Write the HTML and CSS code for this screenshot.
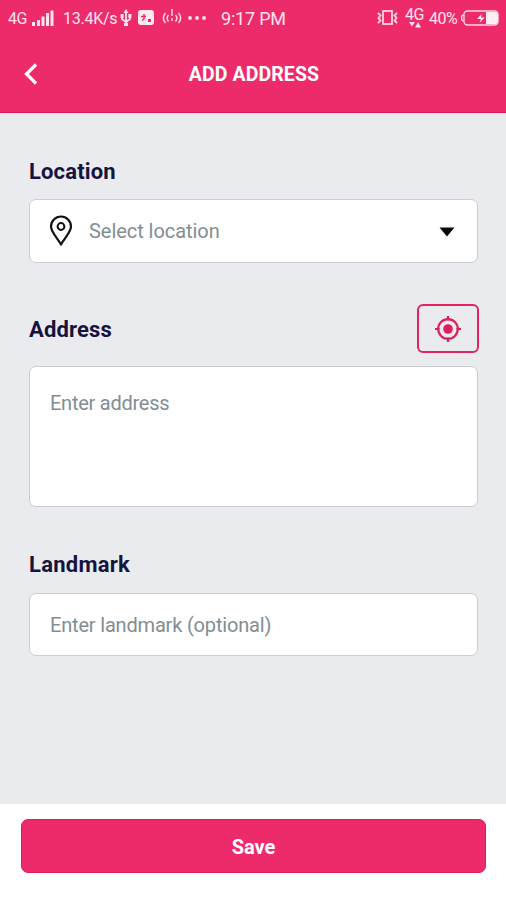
FILE: index.html
```html
<!DOCTYPE html>
<html lang="en">
<head>
<meta charset="utf-8">
<title>Add Address</title>
<link rel="stylesheet" href="styles.css">
</head>
<body>
<header class="top">
  <div class="status">
    <span class="network">4G</span>
    <svg class="signal" width="22" height="18" viewBox="0 0 22 18" fill="#ffe3ee"><path d="M0 13h3v4H0zM5 11h3v6H5zM9.500 7.500h3V17h-3zM14 4h3v13h-3zM18.500 1.500h3V17h-3z"/></svg>
    <span class="speed">13.4K/s</span>
    <svg class="usb" width="12" height="20" viewBox="0 0 12 20" fill="none" stroke="#ffe3ee" stroke-width="1.800"><path d="M6 3v14M2 7v4l4 3 4-3V7"/><path d="M3.500 5L6 1l2.500 4zM4 15h4v3H4zM.6 6h3v4h-3zM8.400 6h3v4h-3z" fill="#ffe3ee" stroke="none"/></svg>
    <svg class="app" width="16" height="16" viewBox="0 0 16 16"><rect width="16" height="15" rx="3" fill="#ffe9f1"/><path d="M3 6.500h5M6 4v5M4 10.500l2-1.500" stroke="#ed2b6b" stroke-width="1.500"/><path d="M10 9h3v3h-3z" fill="#ed2b6b"/></svg>
    <svg class="hotspot" width="20" height="18" viewBox="0 0 20 18" fill="none" stroke="#ffd5e4" stroke-width="1.500"><path d="M3.500 4Q-.8 9 3.500 14M6.500 6Q3.800 9 6.500 12.500M13.500 6Q16.200 9 13.500 12.500M16.500 4Q20.800 9 16.500 14M10 0v7M10 9v3"/></svg>
    <svg class="more" width="18" height="4" viewBox="0 0 18 4" fill="#ffe3ee"><circle cx="2" cy="2" r="1.900"/><circle cx="9" cy="2" r="1.900"/><circle cx="16" cy="2" r="1.900"/></svg>
    <span class="clock">9:17 PM</span>
    <svg class="vibrate" width="21" height="16" viewBox="0 0 21 16" fill="none" stroke="#ffd5e4" stroke-width="1.800"><rect x="6" y="1" width="9" height="13"/><path d="M1 3l2.500 2.500L1.500 8l2 2.500L1 13M20 3l-2.500 2.500 2 2.500-2 2.500L20 13"/></svg>
    <span class="data"><span>4G</span><svg width="12" height="6" viewBox="0 0 12 6" fill="#ffe3ee"><path d="M0 0h6L3 4.500zM6 5.500h6L9 0z"/></svg></span>
    <span class="percent">40%</span>
    <svg class="battery" width="39" height="17" viewBox="0 0 39 17"><rect x="3" y="1" width="34" height="14" rx="3.500" fill="none" stroke="#ffd5e4" stroke-width="1.400"/><path d="M3 5Q.5 5 .5 8T3 11" fill="none" stroke="#ffd5e4" stroke-width="1.300"/><path d="M25 2h9a3 3 0 0 1 3 3v6a3 3 0 0 1-3 3h-9zM20.500 4L16 9h4l-1.500 4L23.500 7.500h-3.500z" fill="#ffeef4"/></svg>
  </div>
  <div class="titlebar">
    <svg class="back" width="16" height="24" viewBox="0 0 16 24" fill="none" stroke="#fff" stroke-width="3.200"><path d="M13 2.500L3.500 12l9.500 9.500"/></svg>
    <h1>ADD ADDRESS</h1>
  </div>
</header>
<main class="form">
  <div class="row row-location"><h2 class="label-location">Location</h2></div>
  <div class="field select">
    <svg class="pin" width="24" height="32" viewBox="0 0 24 32" fill="none" stroke="#111"><path d="M12 29.500C9 24 2 17 2 11.500a10 10 0 0 1 20 0C22 17 15 24 12 29.500z" stroke-width="2.200" stroke-linejoin="round"/><circle cx="12" cy="11.500" r="3.400" stroke-width="2"/></svg>
    <span class="hint hint-location">Select location</span>
    <svg class="caret" width="16" height="10" viewBox="0 0 16 10"><path d="M.5.5h15L8 9.500z" fill="#080808"/></svg>
  </div>
  <div class="row row-address">
    <h2 class="label-address">Address</h2>
    <div class="locate"><svg width="26" height="26" viewBox="0 0 26 26" fill="none" stroke="#df1e5c" stroke-width="2.200"><circle cx="13" cy="13" r="9.800"/><circle cx="13" cy="13" r="4.800" fill="#df1e5c" stroke="none"/><path d="M13 0v4.500M13 21.500V26M0 13h4.500M21.500 13H26"/></svg></div>
  </div>
  <div class="field area"><span class="hint hint-address">Enter address</span></div>
  <div class="row row-landmark"><h2 class="label-landmark">Landmark</h2></div>
  <div class="field landmark"><span class="hint hint-landmark">Enter landmark (optional)</span></div>
</main>
<footer class="bottom"><div class="save"><span>Save</span></div></footer>
</body>
</html>
```
FILE: styles.css
```css
* { box-sizing: border-box; }
body {
  margin: 0;
  width: 506px;
  height: 900px;
  overflow: hidden;
  display: flex;
  flex-direction: column;
  background: #e9ebef;
  font-family: Roboto, "Liberation Sans", sans-serif;
}
svg { display: block; flex: none; }
h1, h2 { margin: 0; }
.top {
  height: 113px;
  flex: none;
  background: #ed2b6b;
  border-bottom: 1px solid #d91659;
  color: #fff;
}
.status {
  height: 36px;
  display: flex;
  align-items: center;
  padding-left: 8px;
  font-size: 16px;
  line-height: 20px;
  color: #ffe3ee;
  white-space: nowrap;
}
.status > span { flex: none; }
.network { width: 24px; letter-spacing: -0.5px; padding-top: 1px; }
.signal { margin-right: 9px; margin-top: -1px; }
.speed { width: 57px; letter-spacing: -0.25px; padding-top: 1px; }
.usb { margin-right: 6px; }
.app { margin-right: 8px; }
.hotspot { margin-right: 6px; }
.more { margin-right: 15px; }
.clock { width: 156px; font-size: 18px; letter-spacing: -0.2px; padding-top: 1px; }
.vibrate { margin-right: 7px; }
.data { width: 24px; line-height: 14px; letter-spacing: -0.5px; }
.data span { display: block; }
.data svg { margin-left: 4px; }
.percent { width: 32px; letter-spacing: -0.5px; padding-top: 1px; }
.titlebar {
  height: 76px;
  display: grid;
  grid-template-columns: 60px 1fr 58px;
  align-items: center;
}
.back { margin-left: 23px; }
h1 {
  font-size: 19.5px;
  font-weight: 700;
  text-align: center;
  line-height: 24px;
  letter-spacing: 0.1px;
  padding-top: 2px;
}
.form { flex: none; height: 691px; padding: 36px 28px 0 29px; }
.row { display: flex; align-items: center; justify-content: space-between; }
.row-location { height: 50px; padding-bottom: 4px; }
.row-address { height: 104px; margin-top: -1px; align-items: flex-start; padding-top: 42px; }
.row-landmark { height: 86px; padding-top: 29px; }
h2 {
  font-size: 22px;
  font-weight: 700;
  line-height: 28px;
  letter-spacing: 0.15px;
  color: #17133f;
}
.label-address { margin-top: 12px; }
.label-landmark { letter-spacing: 0.25px; }
.locate {
  width: 62px;
  height: 49px;
  margin-right: -1px;
  display: flex;
  align-items: center;
  justify-content: center;
  border: 2px solid #e3245f;
  border-radius: 6px;
}
.field {
  height: 64px;
  display: flex;
  align-items: center;
  padding-left: 20px;
  background: #fff;
  border: 1px solid #cbcdd0;
  border-radius: 7px;
}
.select { padding-left: 19px; }
.pin { margin-right: 16px; }
.caret { margin-left: auto; margin-right: 22px; margin-top: 1px; }
.area { height: 141px; align-items: flex-start; padding-top: 23px; }
.landmark { height: 63px; }
.hint {
  font-size: 20px;
  line-height: 26px;
  letter-spacing: -0.18px;
  color: #838d94;
  white-space: nowrap;
}
.hint-location { letter-spacing: -0.05px; }
.hint-address { letter-spacing: -0.25px; }
.bottom { flex: 1; background: #fff; padding: 15px 20px 0 21px; }
.save {
  height: 54px;
  display: flex;
  align-items: center;
  justify-content: center;
  background: #ed2b6b;
  border: 1px solid #df1b5a;
  border-radius: 7px;
  color: #fff;
  font-size: 20px;
  font-weight: 700;
}
.save span { padding-top: 2px; }
```
